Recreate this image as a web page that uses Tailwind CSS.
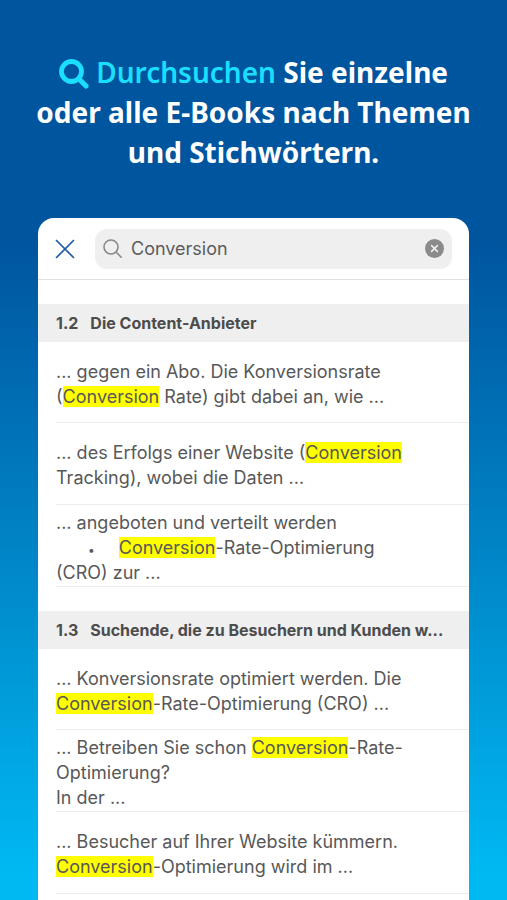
<!DOCTYPE html>
<html lang="de">
  <head>
    <meta charset="UTF-8" />
    <meta name="viewport" content="width=device-width, initial-scale=1.0" />
    <title>E-Books durchsuchen</title>
    <script src="https://cdn.jsdelivr.net/npm/@tailwindcss/browser@4"></script>
  </head>
  <body class="h-screen flex flex-col overflow-hidden bg-linear-to-b from-[#00559f] from-27% to-[#00b9f2] to-97% font-['Inter',sans-serif]">
    <h1 class="pt-[52px] text-center text-[28px] leading-10 font-bold text-white font-['Noto_Sans',sans-serif]">
      <span class="text-[#1adfff] font-semibold">
        <svg class="inline-block align-[-6px] w-[30px] h-[30px]" viewBox="0 0 30 30" fill="none" stroke="currentColor" stroke-linecap="round" aria-hidden="true">
          <circle cx="12.5" cy="12.5" r="10" stroke-width="4.8" />
          <path d="M20 20l7 7" stroke-width="5.2" />
        </svg>
        Durchsuchen</span>
      Sie einzelne<br />
      oder alle E-Books nach Themen<br />
      und Stichwörtern.
    </h1>

    <main class="mt-[46px] mx-[38px] flex-1 min-h-0 overflow-hidden rounded-t-2xl bg-white">
      <form class="flex items-center h-[62px] pl-[15px] pr-[17px] gap-[18px] border-b border-[#e0e0e0]">
        <button type="button" aria-label="Schließen" class="text-[#1f5ba3]">
          <svg class="w-6 h-6" viewBox="0 0 24 24" fill="none" stroke="currentColor" stroke-width="1.7">
            <path d="M3 3l18 18M21 3l-18 18" />
          </svg>
        </button>
        <div class="flex flex-1 min-w-0 items-center h-10 px-2 gap-2 rounded-xl bg-[#efefef]">
          <svg class="w-5 h-5 shrink-0 text-[#888888]" viewBox="0 0 20 20" fill="none" stroke="currentColor" stroke-width="1.6" stroke-linecap="round" aria-hidden="true">
            <circle cx="8" cy="8" r="7" />
            <path d="M13.200 13.200l5 5" />
          </svg>
          <input type="text" aria-label="Suche" value="Conversion" class="flex-1 min-w-0 text-lg text-[#5c5c5c] outline-none" />
          <button type="button" aria-label="Eingabe löschen" class="shrink-0">
            <svg class="w-[19px] h-[19px]" viewBox="0 0 20 20" fill="none">
              <circle cx="10" cy="10" r="10" fill="#8b8b8b" />
              <path d="M6.500 6.500l7 7M13.500 6.500l-7 7" stroke="#efefef" stroke-width="1.7" />
            </svg>
          </button>
        </div>
      </form>

      <section class="mt-6">
        <h2 class="flex items-center h-[38px] px-[18px] gap-3 bg-[#efefef] text-base font-bold text-[#4c4c4c]">
          <span>1.2</span>
          <span class="truncate">Die Content-Anbieter</span>
        </h2>
        <ul class="pl-[18px] text-lg leading-[25px] text-[#585858]">
          <li class="flex items-center min-h-[81px] pt-[3px] border-b border-[#ececec]">
            <p>... gegen ein Abo. Die Konversionsrate<br />(<mark class="bg-[#ffff00] text-inherit">Conversion</mark> Rate) gibt dabei an, wie ...</p>
          </li>
          <li class="flex items-center min-h-[82px] pt-[3px] border-b border-[#ececec]">
            <p>... des Erfolgs einer Website (<mark class="bg-[#ffff00] text-inherit">Conversion</mark><br />Tracking), wobei die Daten ...</p>
          </li>
          <li class="flex items-center min-h-[82px] pt-[3px] border-b border-[#ececec]">
            <p>... angeboten und verteilt werden<br /><span class="pl-8 pr-6 text-xs">•</span><mark class="bg-[#ffff00] text-inherit">Conversion</mark>-Rate-Optimierung<br />(CRO) zur ...</p>
          </li>
        </ul>
      </section>

      <section class="mt-6">
        <h2 class="flex items-center h-[38px] px-[18px] gap-3 bg-[#efefef] text-base font-bold text-[#4c4c4c]">
          <span>1.3</span>
          <span class="whitespace-nowrap">Suchende, die zu Besuchern und Kunden w...</span>
        </h2>
        <ul class="pl-[18px] text-lg leading-[25px] text-[#585858]">
          <li class="flex items-center min-h-[81px] pt-[3px] border-b border-[#ececec]">
            <p>... Konversionsrate optimiert werden. Die<br /><mark class="bg-[#ffff00] text-inherit">Conversion</mark>-Rate-Optimierung (CRO) ...</p>
          </li>
          <li class="flex items-center min-h-[82px] pt-[3px] border-b border-[#ececec]">
            <p>... Betreiben Sie schon <mark class="bg-[#ffff00] text-inherit">Conversion</mark>-Rate-<br />Optimierung?<br />In der ...</p>
          </li>
          <li class="flex items-center min-h-[82px] pt-[3px] border-b border-[#ececec]">
            <p>... Besucher auf Ihrer Website kümmern.<br /><mark class="bg-[#ffff00] text-inherit">Conversion</mark>-Optimierung wird im ...</p>
          </li>
        </ul>
      </section>
    </main>
  </body>
</html>
